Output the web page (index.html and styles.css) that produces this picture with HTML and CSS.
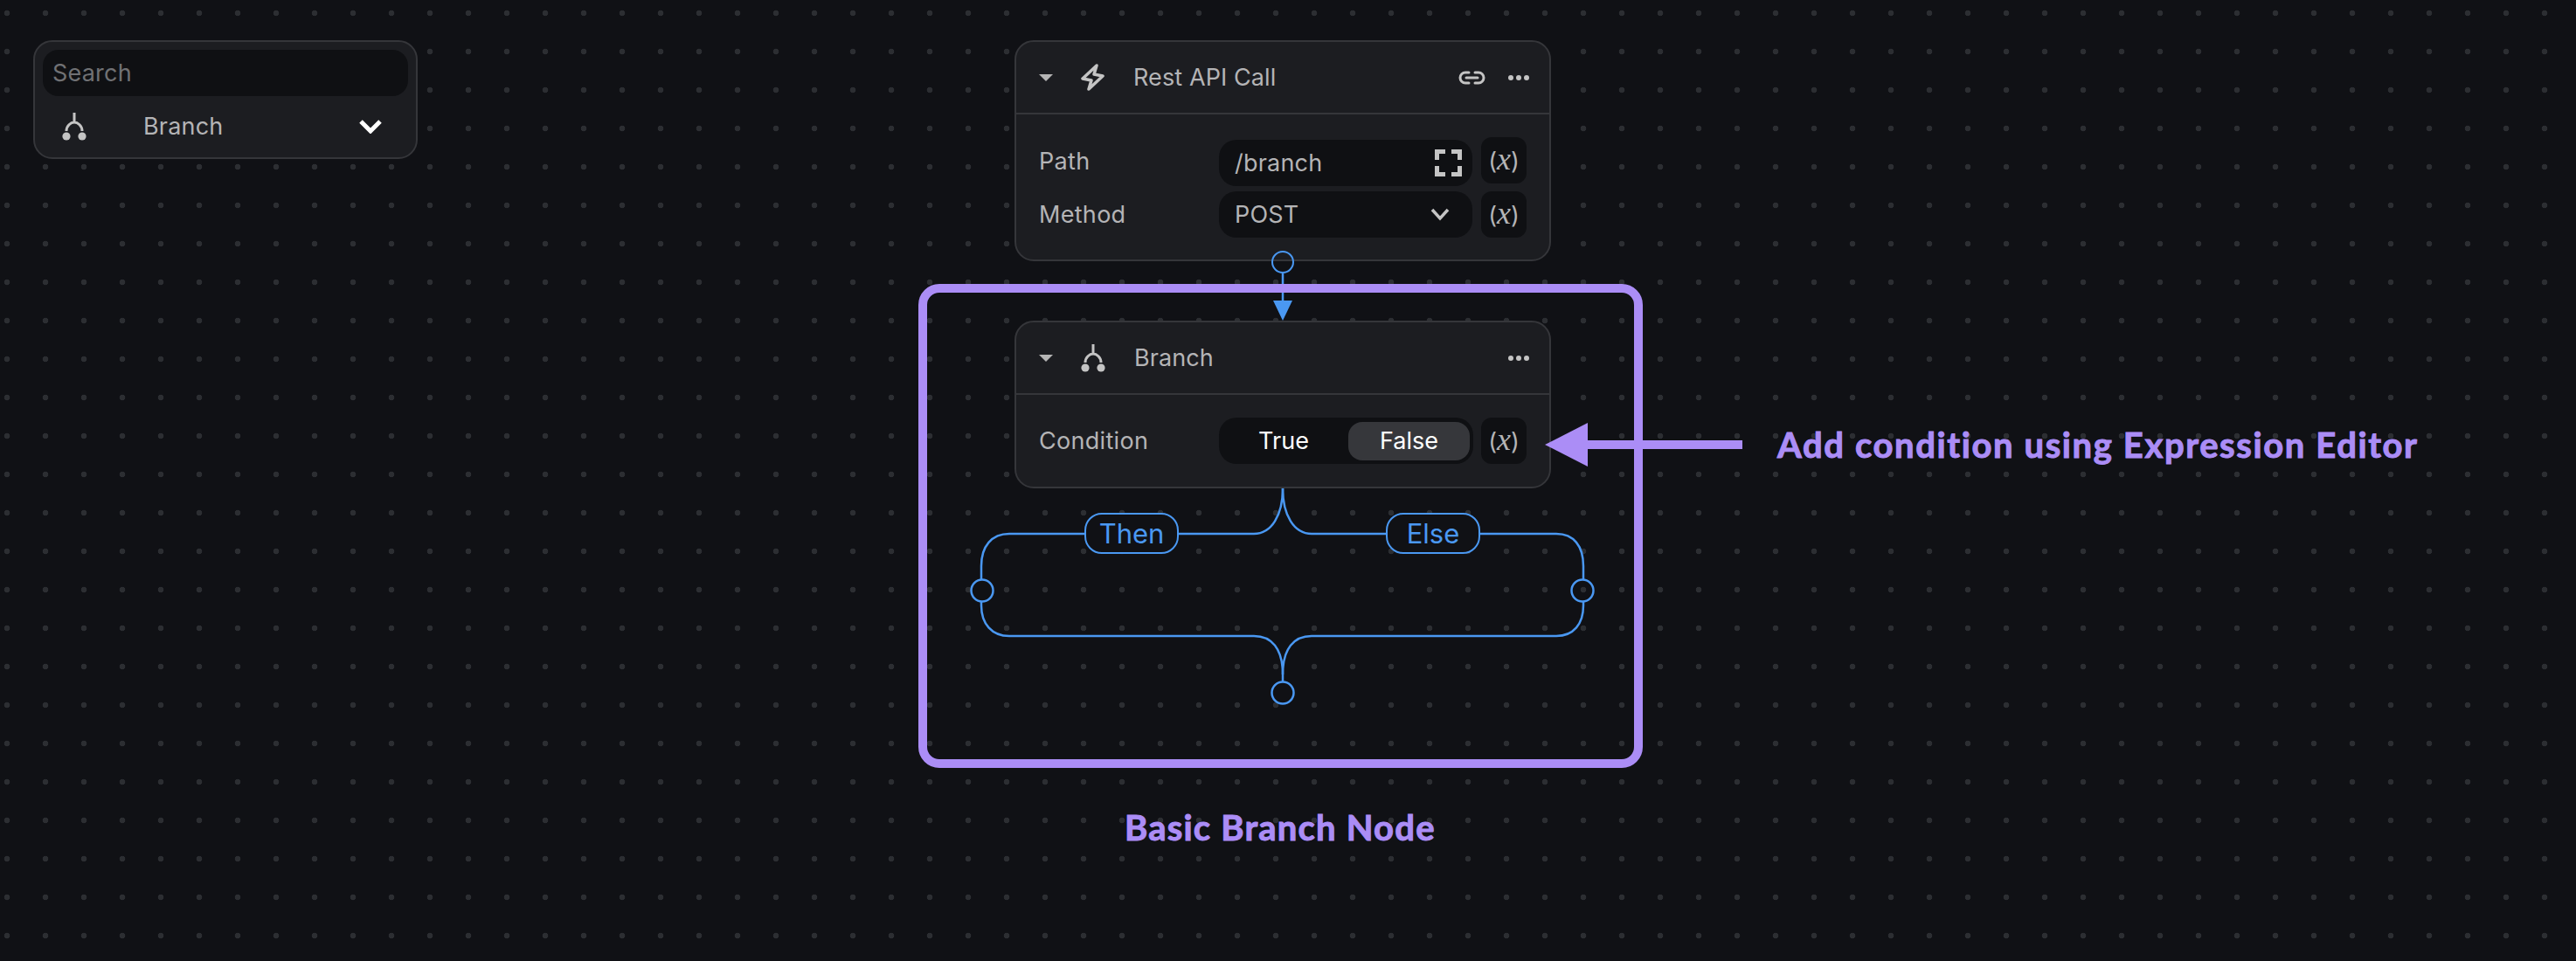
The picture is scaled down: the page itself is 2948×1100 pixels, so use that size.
FILE: index.html
```html
<!DOCTYPE html>
<html lang="en">
  <head>
    <meta charset="UTF-8" />
    <title>Branch Node</title>
    <link rel="stylesheet" href="styles.css">
  </head>
  <body>
    <svg width="0" height="0" class="defs">
      <symbol id="branch" viewBox="0 0 28 32">
        <path d="M14 0V11M5 21C5 15 10 11 14 11S23 15 23 21" fill="none" stroke="currentColor" stroke-width="3"/>
        <circle cx="5" cy="27" r="4.6" fill="currentColor"/>
        <circle cx="23" cy="27" r="4.6" fill="currentColor"/>
      </symbol>
      <symbol id="more" viewBox="0 0 24 6">
        <circle cx="3" cy="3" r="3" fill="currentColor"/>
        <circle cx="12" cy="3" r="3" fill="currentColor"/>
        <circle cx="21" cy="3" r="3" fill="currentColor"/>
      </symbol>
    </svg>

    <!-- connectors -->
    <svg class="wires" width="2948" height="1100" viewBox="0 0 2948 1100">
      <g fill="none" stroke="#4a98f2" stroke-width="2.5">
        <path d="M1468 313V346"/>
        <path d="M1468 559C1468 590 1455 611 1435 611H1155C1135 611 1123 625 1123 648V663"/>
        <path d="M1468 559C1468 590 1481 611 1501 611H1781C1801 611 1812 625 1812 648V663"/>
        <circle cx="1124" cy="676" r="12.5"/>
        <circle cx="1811" cy="676" r="12.5"/>
        <path d="M1123 689V693C1123 714 1135 728 1155 728H1435C1455 728 1468 742 1468 772V780"/>
        <path d="M1812 689V693C1812 714 1801 728 1781 728H1501C1481 728 1468 742 1468 772"/>
        <circle cx="1468" cy="793" r="12.5"/>
      </g>
      <path d="M1457 344H1479L1468 367Z" fill="#4a98f2"/>
    </svg>

    <!-- search panel -->
    <div class="panel">
      <div class="search">Search</div>
      <div class="panel-item">
        <svg class="ico-branch"><use href="#branch"/></svg>
        <span class="panel-name">Branch</span>
        <svg class="panel-chevron" viewBox="0 0 26 16">
          <path d="M2 2L13 13L24 2" fill="none" stroke="currentColor" stroke-width="5"/>
        </svg>
      </div>
    </div>

    <!-- rest node -->
    <div class="node node-rest">
      <div class="node-head">
        <span class="caret"></span>
        <svg class="ico-bolt" viewBox="0 0 27 31">
          <path d="M18 2L2 17L12 19L9 29L25 14L15 12Z" fill="none" stroke="currentColor" stroke-width="3.5" stroke-linejoin="round"/>
        </svg>
        <span class="node-title">Rest API Call</span>
        <svg class="ico-link" viewBox="0 0 31 16">
          <path d="M12 2H8A6 6 0 0 0 8 14H12M19 2H23A6 6 0 0 1 23 14H19M9 8H22" fill="none" stroke="currentColor" stroke-width="3" stroke-linecap="round"/>
        </svg>
        <svg class="ico-more"><use href="#more"/></svg>
      </div>
      <div class="node-body">
        <div class="row">
          <span class="label label-low">Path</span>
          <div class="field field-low">
            <span class="grow">/branch</span>
            <svg class="ico-expand" viewBox="0 0 31 31">
              <path d="M12 2.5H2.5V12M19 2.5H28.5V12M2.5 19V28.5H12M28.5 19V28.5H19" fill="none" stroke="currentColor" stroke-width="5"/>
            </svg>
          </div>
          <span class="expr">(<i>x</i>)</span>
        </div>
        <div class="row">
          <span class="label">Method</span>
          <div class="field">
            <span class="grow">POST</span>
            <svg class="ico-chevron" viewBox="0 0 22 15">
              <path d="M2 2L11 12L20 2" fill="none" stroke="currentColor" stroke-width="3.5"/>
            </svg>
          </div>
          <span class="expr">(<i>x</i>)</span>
        </div>
      </div>
      <span class="port"></span>
    </div>

    <!-- branch node -->
    <div class="node node-branch">
      <div class="node-head">
        <span class="caret"></span>
        <svg class="ico-branch"><use href="#branch"/></svg>
        <span class="node-title">Branch</span>
        <svg class="ico-more"><use href="#more"/></svg>
      </div>
      <div class="node-body">
        <div class="row">
          <span class="label">Condition</span>
          <div class="toggle">
            <span class="seg seg-true">True</span>
            <span class="seg seg-false">False</span>
          </div>
          <span class="expr">(<i>x</i>)</span>
        </div>
      </div>
    </div>

    <span class="tag tag-then">Then</span>
    <span class="tag tag-else">Else</span>

    <!-- annotation -->
    <div class="frame"></div>
    <div class="pointer">
      <span class="pointer-head"></span>
      <span class="pointer-shaft"></span>
    </div>
    <span class="note note-side">Add condition using Expression Editor</span>
    <span class="note note-bottom">Basic Branch Node</span>
  </body>
</html>
```

FILE: styles.css
```css
* {
  margin: 0;
  padding: 0;
  box-sizing: border-box;
}
body {
  width: 2948px;
  height: 1100px;
  position: relative;
  overflow: hidden;
  background-color: #101115;
  background-image: radial-gradient(circle at center, #2c2e32 3px, transparent 3.6px);
  background-size: 44px 44px;
  background-position: -14px -7px;
  font-family: "Inter", "Liberation Sans", sans-serif;
  color: #b4b4b6;
}
.defs {
  position: absolute;
}
.wires {
  position: absolute;
  left: 0;
  top: 0;
}

/* search panel */
.panel {
  position: absolute;
  left: 38px;
  top: 46px;
  width: 440px;
  height: 136px;
  padding: 9px 9px 0;
  background: #1c1d21;
  border: 2px solid #35363a;
  border-radius: 22px;
}
.search {
  height: 53px;
  padding-left: 11px;
  line-height: 53px;
  font-size: 27px;
  letter-spacing: 0.2px;
  color: #707174;
  background: #0f1013;
  border-radius: 18px;
}
.panel-item {
  display: flex;
  align-items: center;
  height: 70px;
  padding: 0 30px 0 22px;
  font-size: 27px;
}
.panel-name {
  flex: 1;
  margin-left: 65px;
  line-height: 70px;
  letter-spacing: 0.2px;
}
.panel-chevron {
  width: 26px;
  height: 16px;
  color: #fff;
}

/* nodes */
.node {
  position: absolute;
  left: 1161px;
  width: 614px;
  background: #1c1d21;
  border: 2px solid #35363a;
  border-radius: 22px;
}
.node-rest {
  top: 46px;
  height: 253px;
}
.node-branch {
  top: 367px;
  height: 192px;
}
.node-head {
  display: flex;
  align-items: center;
  height: 83px;
  padding: 0 23px 0 26px;
  border-bottom: 2px solid #35363a;
}
.caret {
  width: 0;
  height: 0;
  border-left: 8px solid transparent;
  border-right: 8px solid transparent;
  border-top: 8px solid #b5b5b5;
  margin-right: 32px;
}
.ico-branch {
  width: 28px;
  height: 32px;
  color: #c4c4c4;
}
.ico-bolt {
  width: 27px;
  height: 31px;
  color: #c4c4c4;
}
.node-title {
  flex: 1;
  margin-left: 33px;
  font-size: 27px;
  letter-spacing: 0.1px;
}
.ico-link {
  width: 31px;
  height: 16px;
  margin-right: 26px;
  color: #c4c4c4;
}
.ico-more {
  width: 24px;
  height: 6px;
  color: #c4c4c4;
}
.node-body {
  display: flex;
  flex-direction: column;
  gap: 6px;
  padding: 26px 26px 0;
}
.row {
  display: flex;
  align-items: flex-start;
}
.label {
  width: 206px;
  height: 53px;
  line-height: 53px;
  font-size: 27px;
  letter-spacing: 0.3px;
}
.label-low {
  line-height: 56px;
}
.field {
  display: flex;
  align-items: center;
  width: 290px;
  height: 53px;
  padding: 0 26px 0 18px;
  margin-right: 10px;
  font-size: 27px;
  letter-spacing: 0.2px;
  background: #0f1013;
  border-radius: 20px;
}
.field-low {
  margin-top: 3px;
  padding-right: 12px;
}
.grow {
  flex: 1;
}
.ico-expand {
  width: 31px;
  height: 31px;
  color: #c4c4c4;
}
.ico-chevron {
  width: 22px;
  height: 15px;
  color: #c4c4c4;
}
.expr {
  width: 52px;
  height: 53px;
  line-height: 50px;
  text-align: center;
  font-size: 27px;
  background: #0f1013;
  border-radius: 12px;
}
.expr i {
  font-family: "Liberation Serif", serif;
  font-size: 36px;
}
.port {
  position: absolute;
  left: 292px;
  bottom: -16px;
  width: 26px;
  height: 26px;
  border: 2.5px solid #4a98f2;
  border-radius: 50%;
}
.toggle {
  display: flex;
  align-items: center;
  width: 291px;
  height: 53px;
  margin-right: 9px;
  padding-right: 4px;
  font-size: 27px;
  color: #fff;
  background: #0f1013;
  border-radius: 20px;
}
.seg {
  height: 44px;
  line-height: 44px;
  text-align: center;
}
.seg-true {
  width: 148px;
}
.seg-false {
  width: 139px;
  background: #36373b;
  border-radius: 16px;
}

/* then / else labels */
.tag {
  position: absolute;
  top: 587px;
  width: 108px;
  height: 47px;
  line-height: 43px;
  text-align: center;
  font-size: 31px;
  color: #4a98f2;
  background: #101115;
  border: 2px solid #4a98f2;
  border-radius: 20px;
}
.tag-then {
  left: 1241px;
}
.tag-else {
  left: 1586px;
}

/* purple annotation */
.frame {
  position: absolute;
  left: 1051px;
  top: 325px;
  width: 829px;
  height: 554px;
  border: 10px solid #ab8df6;
  border-radius: 24px;
}
.pointer {
  position: absolute;
  left: 1768px;
  top: 484px;
  display: flex;
  align-items: center;
}
.pointer-head {
  width: 0;
  height: 0;
  border-top: 25px solid transparent;
  border-bottom: 25px solid transparent;
  border-right: 49px solid #ab8df6;
}
.pointer-shaft {
  width: 177px;
  height: 10px;
  background: #ab8df6;
}
.note {
  position: absolute;
  font-family: "Lato", "Liberation Sans", sans-serif;
  font-weight: 700;
  font-size: 40px;
  line-height: 48px;
  white-space: nowrap;
  color: #ab8df6;
  -webkit-text-stroke: 1px #ab8df6;
}
.note-side {
  left: 2034px;
  top: 485px;
  letter-spacing: 1.6px;
}
.note-bottom {
  left: 1287px;
  top: 923px;
  letter-spacing: 1.2px;
}
```
